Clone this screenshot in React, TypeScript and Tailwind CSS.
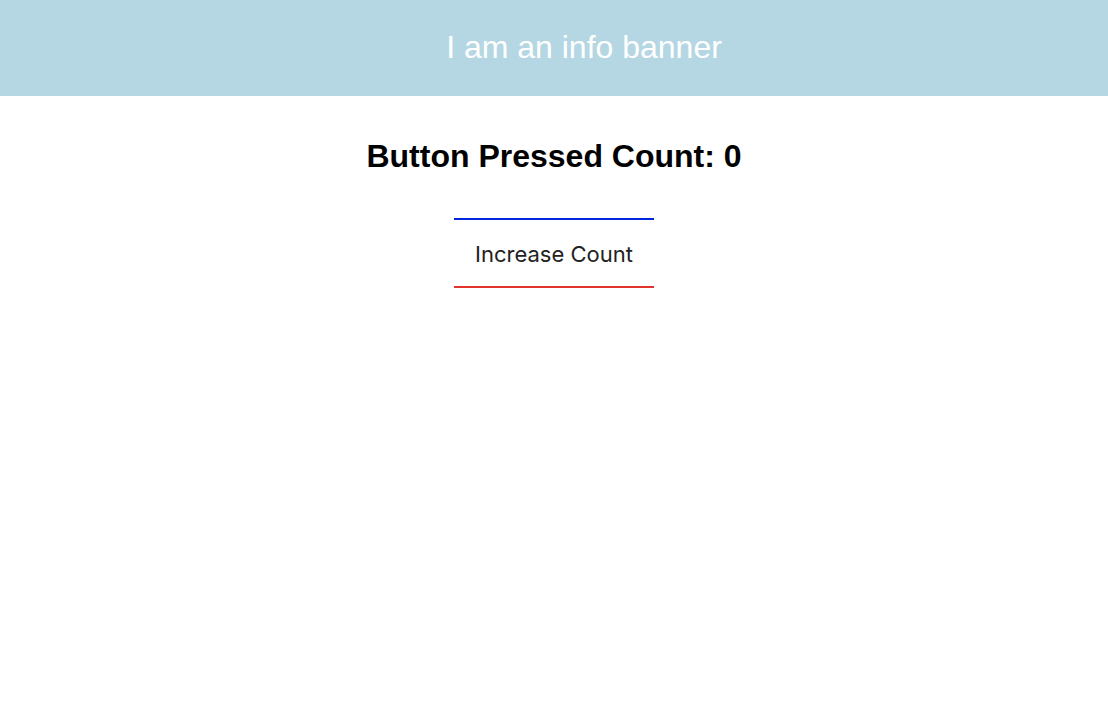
import { useState } from 'react'

export default function App() {
  const [count, setCount] = useState(0)

  return (
    <div className="min-h-[726px] bg-white">
      {/* info banner */}
      <div className="h-[96px] bg-[#b5d7e3] flex items-center justify-center pl-[60px] pb-[3px]">
        <p className="text-white text-[32px] font-['Liberation_Sans',Arial,sans-serif]">I am an info banner</p>
      </div>

      <div className="flex flex-col items-center">
        <h1 className="mt-[40px] text-[32px] leading-[40px] font-bold text-black font-['Liberation_Sans',Arial,sans-serif]">
          Button Pressed Count: {count}
        </h1>
        <button
          type="button"
          onClick={() => setCount(c => c + 1)}
          className="mt-[42px] w-[200px] h-[70px] pt-[3px] border-t-2 border-b-2 border-t-[#0026e0] border-b-[#e2342b] text-[22px] text-[#222] font-['Inter',sans-serif] flex items-center justify-center"
        >
          Increase Count
        </button>
      </div>
    </div>
  )
}
